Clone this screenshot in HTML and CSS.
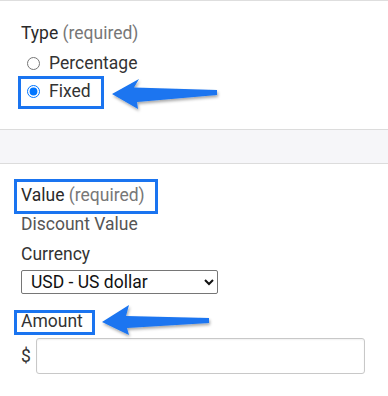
FILE: index.html
```html
<!DOCTYPE html>
<html>
<head>
<meta charset="utf-8">
<link rel="stylesheet" href="styles.css">
</head>
<body>
<div class="page">
  <section class="group group-type">
    <div class="label">Type <span class="req">(required)</span></div>
    <label class="radio-row"><input type="radio" name="type"> <span>Percentage</span></label>
    <label class="radio-row"><input type="radio" name="type" checked> <span>Fixed</span></label>
  </section>
  <div class="band"></div>
  <section class="group group-value">
    <div class="label">Value <span class="req">(required)</span></div>
    <div class="sub">Discount Value</div>
    <div class="field-label">Currency</div>
    <select class="currency"><option>USD - US dollar</option></select>
    <div class="field-label amount-label">Amount</div>
    <div class="amount-row">
      <span class="cur">$</span>
      <input class="amount" type="text">
    </div>
  </section>

  <svg class="annot" width="388" height="396" viewBox="0 0 388 396">
    <defs>
      <filter id="sh" x="-20%" y="-50%" width="140%" height="200%">
        <feDropShadow dx="1" dy="2" stdDeviation="1.5" flood-color="#000" flood-opacity="0.35"/>
      </filter>
    </defs>
    <rect x="19.5" y="76.5" width="83" height="30" fill="none" stroke="#1a74f0" stroke-width="3"/>
    <rect x="15.5" y="179.5" width="141" height="32" fill="none" stroke="#1a74f0" stroke-width="3"/>
    <rect x="15.5" y="310.5" width="78" height="22" fill="none" stroke="#1a74f0" stroke-width="3"/>
    <polygon filter="url(#sh)" fill="#1a74f0" points="112,93 139,78 134,86.5 217,89 217,94 137,101 138,108"/>
    <polygon filter="url(#sh)" fill="#1a74f0" points="102,321 129,304 126,315 209,317 209,322 127,327 129,334"/>
  </svg>
</div>
</body>
</html>
```
FILE: styles.css
```css
html, body {
  margin: 0;
  padding: 0;
  background: #fff;
}
body {
  font-family: Roboto, "Liberation Sans", sans-serif;
  font-size: 17.5px;
  color: #2a2a2a;
}
.page {
  position: relative;
  width: 388px;
  height: 396px;
  overflow: hidden;
  border-top: 1px solid #dedede;
  box-sizing: border-box;
}
.group {
  padding: 0 21px;
}
.group-type {
  padding-top: 20px;
  height: 128px;
  box-sizing: border-box;
}
.label {
  line-height: 24px;
}
.req {
  color: #777;
}
.group-type .label {
  margin-bottom: 4px;
}
.radio-row {
  display: flex;
  align-items: center;
  height: 28px;
  line-height: 24px;
  color: #333;
}
.radio-row input {
  margin: 0 9px 0 6px;
  width: 13px;
  height: 13px;
}
.band {
  height: 33px;
  background: #f6f6f9;
  border-top: 1px solid #dcdcdc;
  border-bottom: 1px solid #dcdcdc;
}
.group-value {
  padding-top: 19px;
}
.sub {
  color: #555;
  line-height: 24px;
  margin-top: 5px;
}
.field-label {
  line-height: 24px;
  margin-top: 6px;
  color: #333;
}
.currency {
  display: block;
  margin-top: 4px;
  width: 197px;
  height: 24px;
  box-sizing: border-box;
  font-family: Roboto, "Liberation Sans", sans-serif;
  font-size: 17.5px;
  color: #111;
  border: 1px solid #767676;
  border-radius: 2px;
  background: #fff;
  padding: 0 0 0 5px;
}
.amount-label {
  margin-top: 15px;
}
.amount-row {
  display: flex;
  align-items: center;
  margin-top: 5px;
}
.cur {
  color: #333;
  width: 15px;
}
.amount {
  width: 329px;
  height: 36px;
  box-sizing: border-box;
  border: 1px solid #c8c8c8;
  border-radius: 3px;
  box-shadow: inset 0 1px 2px rgba(0,0,0,0.06);
  margin: 0;
}
.annot {
  position: absolute;
  left: 0;
  top: 0;
  pointer-events: none;
}
```
